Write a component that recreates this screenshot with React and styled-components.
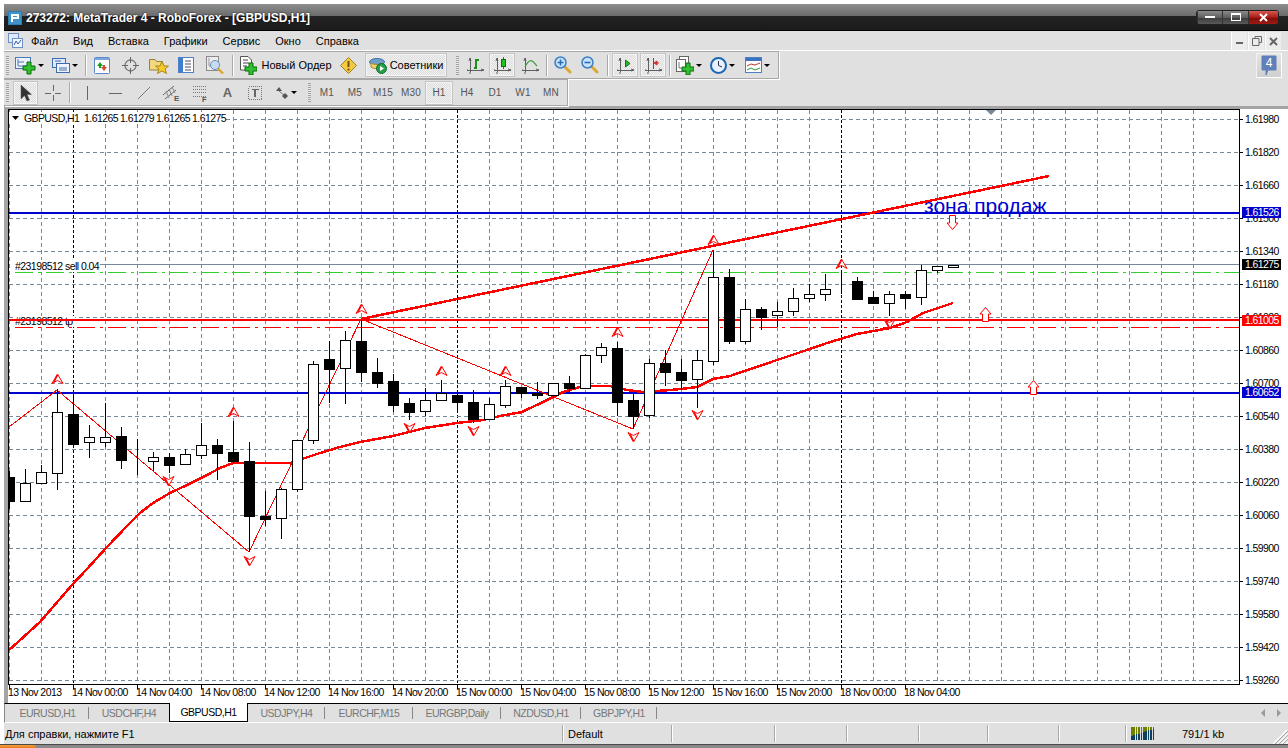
import React from "react";
import styled, { createGlobalStyle, css } from "styled-components";

const GlobalStyle = createGlobalStyle`
  html, body {
    margin: 0;
    padding: 0;
    overflow: hidden;
    background: #fff;
  }
  * {
    box-sizing: border-box;
  }
`;

/* ---------- chart data ---------- */

// body top, body bottom, wick top, wick bottom, black
const CANDLES = [
  [477, 501, 471, 509, 1], [483, 501, 469, 502, 0], [472, 483, 465, 483, 0], [412, 473, 389, 490, 0],
  [414, 444, 393, 448, 1], [437, 442, 425, 458, 0], [437, 442, 403, 447, 0], [436, 460, 427, 469, 1],
  [460, 460, 439, 475, 1], [457, 461, 452, 471, 0], [457, 465, 453, 473, 1], [454, 464, 449, 464, 0],
  [445, 455, 423, 459, 0], [445, 453, 439, 480, 1], [452, 461, 421, 463, 1], [461, 516, 442, 552, 1],
  [516, 519, 491, 526, 1], [489, 518, 488, 539, 0], [440, 489, 440, 492, 0], [364, 440, 361, 444, 0],
  [359, 369, 341, 403, 1], [340, 368, 331, 404, 0], [341, 372, 320, 382, 1], [372, 383, 358, 388, 1],
  [381, 405, 374, 412, 1], [403, 412, 398, 420, 1], [400, 411, 388, 416, 0], [393, 400, 380, 400, 0],
  [395, 402, 393, 412, 1], [402, 419, 390, 423, 1], [404, 419, 398, 420, 0], [386, 405, 380, 408, 0],
  [387, 393, 387, 398, 1], [393, 395, 382, 399, 1], [383, 395, 383, 398, 0], [383, 388, 376, 393, 1],
  [355, 388, 354, 389, 0], [347, 355, 343, 363, 0], [348, 402, 342, 416, 1], [400, 416, 393, 429, 1],
  [363, 415, 359, 418, 0], [363, 372, 350, 386, 1], [372, 380, 359, 390, 1], [360, 379, 350, 408, 0],
  [277, 361, 250, 365, 0], [277, 341, 269, 344, 1], [309, 341, 299, 344, 0], [309, 317, 307, 330, 1],
  [311, 315, 302, 327, 0], [298, 311, 288, 316, 0], [294, 298, 284, 302, 0], [289, 294, 274, 301, 0],
  [283, 283, 272, 294, 1], [281, 299, 277, 300, 1], [297, 303, 291, 304, 1], [294, 303, 291, 316, 0],
  [294, 298, 291, 309, 1], [270, 297, 265, 305, 0], [266, 270, 266, 273, 0], [265, 267, 265, 267, 0],
];

const MA_LINE =
  "8,651 40,622 72,585 87,569 107,547 128,525 140,513 153,503 170,493 187,485 207,475 220,468 233,463 260,463 290,463 305,458 320,453 340,447 360,442 393,436 425,428 457,423 483,420 500,416 522,412 543,402 563,392 580,387 593,386 610,386 627,390 643,392 670,390 681,389 697,387 713,379 730,376 777,360 807,350 827,343 857,334 890,328 907,322 923,313 953,303";
const ZIGZAG = "9,427 57,390 249,552 361,319 633,429 713,250";

const PRICES = [
  "1.61980", "1.61820", "1.61660", "1.61500", "1.61340", "1.61180", "1.61020", "1.60860", "1.60700",
  "1.60540", "1.60380", "1.60220", "1.60060", "1.59900", "1.59740", "1.59580", "1.59420", "1.59260",
];

const TIMES = [
  "13 Nov 2013", "14 Nov 00:00", "14 Nov 04:00", "14 Nov 08:00", "14 Nov 12:00", "14 Nov 16:00", "14 Nov 20:00",
  "15 Nov 00:00", "15 Nov 04:00", "15 Nov 08:00", "15 Nov 12:00", "15 Nov 16:00", "15 Nov 20:00", "18 Nov 00:00",
  "18 Nov 04:00",
];

const UP_MARKS = [[57, 379], [233, 412], [361, 309], [441, 371], [505, 371], [617, 332], [713, 240], [841, 264]];
const DOWN_MARKS = [[168, 481], [249, 561], [409, 428], [473, 431], [633, 437], [697, 415], [889, 324]];

const BOXES = [
  { y: 207, text: "1.61526", color: "#0000cd" },
  { y: 259, text: "1.61275", color: "#000" },
  { y: 315, text: "1.61005", color: "#ff0000" },
  { y: 387, text: "1.60652", color: "#0000cd" },
];

const TABS = [
  { name: "EURUSD,H1", w: 83 },
  { name: "USDCHF,H4", w: 80 },
  { name: "GBPUSD,H1", w: 79, active: true },
  { name: "USDJPY,H4", w: 77 },
  { name: "EURCHF,M15", w: 88 },
  { name: "EURGBP,Daily", w: 88 },
  { name: "NZDUSD,H1", w: 80 },
  { name: "GBPJPY,H1", w: 76 },
];

const MENU = ["Файл", "Вид", "Вставка", "Графики", "Сервис", "Окно", "Справка"];
const PERIODS = ["M1", "M5", "M15", "M30", "H1", "H4", "D1", "W1", "MN"];
const STATUS_CELLS = [109, 103, 72, 72, 69, 71, 67];

/* ---------- shell ---------- */

const Page = styled.div`
  width: 1288px;
  height: 748px;
  display: flex;
  flex-direction: column;
  padding-top: 4px;
  background: #fff;
  font-family: "Liberation Sans", Arial, sans-serif;
  overflow: hidden;
`;

const Body = styled.div`
  flex: 1;
  display: flex;
  flex-direction: column;
  padding-left: 4px;
  min-height: 0;
`;

const TitleBar = styled.div`
  height: 27px;
  flex: none;
  display: flex;
  align-items: center;
  padding: 0 9px 0 4px;
  gap: 4px;
  background: linear-gradient(#8e8e8e 0, #6c6c6c 12px, #232323 12px, #1b1b1b 26px, #000 26px);
`;

const TitleText = styled.span`
  flex: 1;
  color: #fff;
  font: bold 12px "Liberation Sans", Arial, sans-serif;
  text-shadow: 0 0 2px #000;
`;

const WindowControls = styled.div`
  display: flex;
  height: 15px;
  margin-top: -1px;
  border: 1px solid #222;
  border-radius: 3px;
  overflow: hidden;
`;

const WindowButton = styled.div`
  width: ${(p) => p.$w}px;
  display: flex;
  align-items: center;
  justify-content: center;
  border-left: 1px solid #333;
  background: ${(p) =>
    p.$red
      ? "linear-gradient(#d65a52 0, #a81a12 50%, #7c0c06 51%, #a01a12 100%)"
      : "linear-gradient(#8a8a8a 0, #5e5e5e 50%, #3a3a3a 51%, #5a5a5a 100%)"};
`;

const MenuBar = styled.div`
  height: 19px;
  flex: none;
  display: flex;
  align-items: center;
  gap: 15px;
  padding-left: 4px;
  background: #e0e0e0;
`;

const MenuIcon = styled.div`
  width: 15px;
  height: 17px;
  display: flex;
  align-items: center;
  margin-right: -7px;
`;

const MenuItem = styled.span`
  font-size: 11px;
  color: #000;
`;

const MenuSpacer = styled.div`
  flex: 1;
`;

const MdiButtons = styled.div`
  display: flex;
  gap: 1px;
  height: 18px;
  margin-right: 7px;
  margin-top: 1px;
`;

const MdiButton = styled.div`
  width: 16px;
  display: flex;
  align-items: center;
  justify-content: center;
  background: #ececec;
  border-left: 1px solid #fff;
`;

const ToolArea = styled.div`
  position: relative;
  flex: none;
  height: 56px;
  display: flex;
  flex-direction: column;
  border-top: 1px solid #fff;
  background: #e0e0e0;
`;

const ToolRow = styled.div`
  display: flex;
  align-items: center;
  flex: none;
  height: ${(p) => p.$h}px;
  width: ${(p) => p.$w}px;
  border-top: 1px solid #a8a8a8;
  border-right: 1px solid #a8a8a8;
  border-bottom: 1px solid #a8a8a8;
  box-shadow: 1px 1px 0 #fff;
`;

const Grip = styled.div`
  width: 3px;
  height: 19px;
  margin: 0 ${(p) => p.$right}px 0 ${(p) => p.$left}px;
  flex: none;
  background: repeating-linear-gradient(#a0a0a0 0 1px, #e8e8e8 1px 2px);
`;

const Tool = styled.div`
  flex: none;
  width: ${(p) => p.$w}px;
  height: 24px;
  display: flex;
  align-items: center;
  justify-content: center;
  gap: ${(p) => p.$gap || 2}px;
  margin-left: ${(p) => p.$ml || 0}px;
  color: #555;
  font-size: 10px;
  letter-spacing: 0.2px;
  ${(p) =>
    p.$pressed &&
    css`
      border: 2px solid #f4f4f4;
      outline: 1px solid #c4c4c4;
      outline-offset: -1px;
      background: repeating-conic-gradient(#f2f2f2 0 25%, #dcdcdc 0 50%) 0 0 / 2px 2px;
    `}
`;

const Sep = styled.div`
  width: 1px;
  height: 21px;
  flex: none;
  margin: 0 ${(p) => p.$right}px 0 ${(p) => p.$left}px;
  background: #a8a8a8;
  box-shadow: 1px 0 0 #fff;
`;

const ToolLabel = styled.span`
  font-size: 11px;
  color: #000;
  letter-spacing: 0;
  white-space: nowrap;
`;

const TextGlyph = styled.b`
  font-size: 13px;
  color: #666;
`;

const Caret = styled.span`
  width: 0;
  height: 0;
  border-left: 3px solid transparent;
  border-right: 3px solid transparent;
  border-top: 3px solid #000;
`;

const NotifyButton = styled.div`
  position: absolute;
  right: 6px;
  top: 2px;
  width: 26px;
  height: 25px;
  display: flex;
  align-items: center;
  justify-content: center;
  background: linear-gradient(#e4e4e4, #cfcfcf);
  border-right: 1px solid #fff;
  border-bottom: 1px solid #fff;
  border-left: 1px solid #f2f2f2;
  border-top: 1px solid #f2f2f2;
`;

const ChartFrame = styled.div`
  flex: none;
  height: 597px;
  display: flex;
  border-top: 3px solid #a4a4a4;
  border-left: 4px solid #a4a4a4;
  background: #fff;
`;

const ChartSvg = styled.svg`
  display: block;
  flex: none;
`;

const ChartText = styled.text`
  font-family: "Liberation Sans", Arial, sans-serif;
  font-size: ${(p) => p.$size || 10.5}px;
  letter-spacing: ${(p) => p.$spacing ?? -0.6}px;
  fill: ${(p) => p.$color || "#000"};
`;

const TabBar = styled.div`
  position: relative;
  flex: none;
  height: 20px;
  display: flex;
  padding-left: 1px;
  border-top: 1px solid #000;
  border-left: 1px solid #888;
  border-bottom: 1px solid #fff;
  background: #e0e0e0;
`;

const Tab = styled.div`
  flex: none;
  width: ${(p) => p.$w}px;
  height: 18px;
  display: flex;
  align-items: center;
  justify-content: center;
  font-size: 10.5px;
  color: #777;
  letter-spacing: -0.5px;
  ${(p) =>
    p.$active
      ? css`
          margin-top: -1px;
          height: 19px;
          background: #fff;
          color: #000;
          border: 1px solid #000;
          border-top: none;
        `
      : p.$noSep
      ? ""
      : css`
          background: linear-gradient(#888, #888) right 3px / 1px 12px no-repeat;
        `}
`;

const TabArrows = styled.div`
  margin-left: auto;
  margin-right: 7px;
  display: flex;
  align-items: center;
  gap: 12px;
`;

const TabArrow = styled.span`
  width: 0;
  height: 0;
  border-top: 4px solid transparent;
  border-bottom: 4px solid transparent;
  ${(p) => (p.$left ? "border-right: 4px solid #999;" : "border-left: 4px solid #999;")}
`;

const StatusBar = styled.div`
  position: relative;
  flex: none;
  height: 21px;
  display: flex;
  align-items: center;
  background: #e0e0e0;
  font-size: 11px;
  color: #000;
`;

const StatusCell = styled.div`
  flex: none;
  width: ${(p) => p.$w}px;
  height: 17px;
  display: flex;
  align-items: center;
  padding-left: ${(p) => p.$pad || 0}px;
  gap: 5px;
  ${(p) => !p.$last && "border-right: 1px solid #a8a8a8; box-shadow: 1px 0 0 #fff;"}
`;

const TrafficText = styled.span`
  margin-left: 22px;
`;

const ResizeGrip = styled.svg`
  position: absolute;
  right: 0;
  bottom: 0;
`;

const TaskBar = styled.div`
  flex: none;
  height: 4px;
  display: flex;
  border-top: 1px solid #4a4a4a;
  background: #8a8a8a;
`;

const StartButton = styled.div`
  width: 36px;
  background: linear-gradient(#f6a13c, #e8791a);
  border-top-right-radius: 4px;
`;

/* ---------- icons ---------- */

const Axes = () => (
  <>
    <path d="M5 3V17M2 15H19" stroke="#5f5f5f" fill="none" shapeRendering="crispEdges" />
    <path d="M4 6L5 3L6 6M16 14L19 15L16 16" stroke="#5f5f5f" fill="none" />
    <path d="M5 17V19M3 15H2" stroke="#5f5f5f" fill="none" />
  </>
);

const Plus = ({ x, y, s = 1 }) => (
  <path
    transform={`translate(${x} ${y}) scale(${s})`}
    d="M-2-6H2V-2H6V2H2V6H-2V2H-6V-2H-2Z"
    fill="#2fc12f"
    stroke="#0b6a0b"
    strokeWidth="1"
  />
);

const Icon = ({ w = 20, h = 20, children }) => (
  <svg width={w} height={h} viewBox={`0 0 ${w} ${h}`}>
    {children}
  </svg>
);

const NewChartIcon = () => (
  <Icon w={21} h={19}>
    <rect x="0.5" y="1.5" width="15" height="11" fill="#eef3fb" stroke="#4a78b8" />
    <path d="M3 3V10H12M3 6H9" stroke="#4a78b8" fill="none" />
    <Plus x={14} y={12} />
  </Icon>
);

const ProfilesIcon = () => (
  <Icon w={18} h={17}>
    <rect x="0.5" y="1.5" width="13" height="9" fill="#dfe9f8" stroke="#3f6cae" />
    <rect x="4.5" y="6.5" width="13" height="9" fill="#eef3fb" stroke="#3f6cae" />
    <path d="M3 4H9M7 11H15M7 13H15" stroke="#3f6cae" />
  </Icon>
);

const WatchIcon = () => (
  <Icon w={16} h={17}>
    <rect x="0.5" y="0.5" width="15" height="16" rx="1" fill="#fbfcff" stroke="#5d87c6" />
    <rect x="1" y="1" width="14" height="2" fill="#7da6df" />
    <path d="M6 5L9 9H7V11H5V9H3Z" fill="#1c9c1c" />
    <path d="M10 14L7 10H9V8H11V10H13Z" fill="#d8492c" />
  </Icon>
);

const CrosshairIcon = () => (
  <Icon w={17} h={17}>
    <circle cx="8.5" cy="8.5" r="5.5" fill="none" stroke="#777" strokeWidth="1.3" />
    <path d="M8.5 0V6M8.5 11V17M0 8.5H6M11 8.5H17" stroke="#666" />
  </Icon>
);

const FavIcon = () => (
  <Icon w={20} h={18}>
    <path d="M0.5 3.5H6L7.5 5.5H13V14H0.5Z" fill="#f2d77e" stroke="#98803a" />
    <path d="M13 5L15 10H19.5L16 13L17.5 17.5L13 15L8.5 17.5L10 13L6.5 10H11Z" fill="#f5c92e" stroke="#a88716" />
  </Icon>
);

const TerminalIcon = () => (
  <Icon w={16} h={16}>
    <rect x="0.5" y="0.5" width="15" height="15" fill="#fdfdff" stroke="#4f80c4" />
    <rect x="1" y="1" width="4" height="14" fill="#3f7fd0" />
    <path d="M7 4H13M7 7H13M7 10H13M7 13H13" stroke="#4e4e6a" />
  </Icon>
);

const TesterIcon = () => (
  <Icon w={19} h={19}>
    <rect x="0.5" y="0.5" width="12" height="14" fill="#ececec" stroke="#8a8a8a" />
    <path d="M3 2V10H10" stroke="#999" fill="none" />
    <circle cx="9" cy="9" r="4.5" fill="#c6dcf5" stroke="#6d8fb8" />
    <path d="M12 12.5L17 17.5" stroke="#d6a92c" strokeWidth="2.4" />
  </Icon>
);

const OrderIcon = () => (
  <Icon w={17} h={19}>
    <path d="M0.5 0.5H8L11.5 4V14H0.5Z" fill="#fff" stroke="#555" />
    <path d="M3 4H8M3 7H9M3 10H7" stroke="#444" />
    <Plus x={11} y={13} />
  </Icon>
);

const AlertIcon = () => (
  <Icon w={17} h={17}>
    <path d="M8.5 0.5L16.5 8.5L8.5 16.5L0.5 8.5Z" fill="#f5c940" stroke="#9a8328" strokeLinejoin="round" />
    <path d="M8.5 4V10M8.5 11.5V13.5" stroke="#6a5410" strokeWidth="2" />
  </Icon>
);

const ExpertIcon = () => (
  <Icon w={18} h={18}>
    <ellipse cx="8" cy="6" rx="7.5" ry="3.5" fill="#6f9fc9" stroke="#3f6f9f" />
    <path d="M2 7C5 9 11 9 14 7L14 11C11 13 4 13 2 11Z" fill="#f0d36a" stroke="#a58b2c" />
    <circle cx="12.5" cy="12.5" r="5" fill="#25a04a" stroke="#0f6a2c" />
    <path d="M11 10V15L15 12.5Z" fill="#fff" />
  </Icon>
);

const BarsIcon = () => (
  <Icon h={20}>
    <Axes />
    <path d="M9 13H11V5H14" stroke="#1d8f1d" strokeWidth="1.5" fill="none" shapeRendering="crispEdges" />
  </Icon>
);

const CandleIcon = () => (
  <Icon h={20}>
    <Axes />
    <path d="M11.5 2V14" stroke="#1d7f1d" shapeRendering="crispEdges" />
    <rect x="9.5" y="4.5" width="4" height="7" fill="#21c021" stroke="#126d12" shapeRendering="crispEdges" />
  </Icon>
);

const LineIcon = () => (
  <Icon h={20}>
    <Axes />
    <path d="M5 12C8 6 10 5 12 6C14 7 15 9 17 11" stroke="#3a9a3a" fill="none" strokeWidth="1.2" />
  </Icon>
);

const LensIcon = ({ minus }) => (
  <Icon w={18} h={18}>
    <path d="M10.5 10.5L16 16" stroke="#d8a92e" strokeWidth="3" strokeLinecap="round" />
    <circle cx="6.5" cy="6.5" r="5.5" fill="#c8e2fb" stroke="#3d7fc4" strokeWidth="1.5" />
    <path d={minus ? "M3.5 6.5H9.5" : "M3.5 6.5H9.5M6.5 3.5V9.5"} stroke="#2a6fb5" strokeWidth="1.6" />
  </Icon>
);

const ScrollIcon = () => (
  <Icon h={20}>
    <Axes />
    <path d="M10.5 5V12L15 8.5Z" fill="#26b626" stroke="#137a13" />
  </Icon>
);

const ShiftIcon = () => (
  <Icon h={20}>
    <Axes />
    <path d="M10.5 3V14" stroke="#3a5a9a" shapeRendering="crispEdges" />
    <path d="M16 8H13M11 8L14 6V10Z" stroke="#c33" fill="#c33" />
  </Icon>
);

const IndicatorsIcon = () => (
  <Icon w={18} h={19}>
    <rect x="3.5" y="0.5" width="9" height="12" fill="#fff" stroke="#666" />
    <rect x="0.5" y="3.5" width="9" height="12" fill="#fff" stroke="#666" />
    <path d="M3 6V12H8" stroke="#777" fill="none" />
    <Plus x={12} y={13} />
  </Icon>
);

const ClockIcon = () => (
  <Icon w={17} h={17}>
    <circle cx="8.5" cy="8.5" r="7.5" fill="#e8f1fb" stroke="#1d66b5" strokeWidth="2" />
    <path d="M8.5 4V8.5L12 10" stroke="#334" fill="none" />
  </Icon>
);

const TemplatesIcon = () => (
  <Icon w={17} h={16}>
    <rect x="0.5" y="0.5" width="16" height="15" fill="#fbfcfe" stroke="#4f7fbf" />
    <rect x="1" y="1" width="15" height="3" fill="#3a74c0" />
    <path d="M2 9L6 7L10 8L15 6" stroke="#c0392b" fill="none" />
    <path d="M2 13L6 11L10 13L15 11" stroke="#2f9a2f" fill="none" />
  </Icon>
);

const CursorIcon = () => (
  <Icon w={12} h={18}>
    <path d="M1 1V15L4.5 11.5L7 17L9.5 16L7 10.5H11.5Z" fill="#333" stroke="#555" strokeWidth="0.5" />
  </Icon>
);

const ThinCross = () => (
  <Icon w={16} h={16}>
    <path d="M8 0V6M8 10V16M0 8H6M10 8H16" stroke="#666" shapeRendering="crispEdges" />
  </Icon>
);

const VLine = () => (
  <Icon w={4} h={14}>
    <path d="M2 0V14" stroke="#666" strokeWidth="1" shapeRendering="crispEdges" />
  </Icon>
);

const HLine = () => (
  <Icon w={13} h={4}>
    <path d="M0 2H13" stroke="#666" shapeRendering="crispEdges" />
  </Icon>
);

const TrendIcon = () => (
  <Icon w={14} h={14}>
    <path d="M1 13L13 1" stroke="#777" />
  </Icon>
);

const ChannelIcon = () => (
  <Icon w={18} h={18}>
    <path d="M0 11L11 2M2 15L13 6" stroke="#666" />
    <path d="M3 7L6 14M6 5L9 12M9 3L12 9" stroke="#888" />
    <text x="11" y="17" fontSize="8" fontFamily="Liberation Sans" fontWeight="bold" fill="#555">E</text>
  </Icon>
);

const FiboIcon = () => (
  <Icon w={16} h={18}>
    <path d="M1 2H15M1 5H15M1 8H15M1 12H15" stroke="#777" strokeDasharray="1 1" shapeRendering="crispEdges" />
    <text x="10" y="17.5" fontSize="7.5" fontFamily="Liberation Sans" fontWeight="bold" fill="#555">F</text>
  </Icon>
);

const LabelIcon = () => (
  <Icon w={14} h={14}>
    <rect x="0.5" y="0.5" width="13" height="13" fill="none" stroke="#777" strokeDasharray="1 1" shapeRendering="crispEdges" />
    <path d="M3.5 3.5H10.5M7 3.5V11" stroke="#666" strokeWidth="1.6" shapeRendering="crispEdges" />
  </Icon>
);

const ArrowsIcon = () => (
  <Icon w={14} h={14}>
    <path d="M1 5L4 1L7 5Z" fill="#555" />
    <path d="M4 5L10 10" stroke="#777" />
    <path d="M7 10L10 13L13 10L10 7Z" fill="#555" />
  </Icon>
);

const NotifyIcon = () => (
  <svg width="16" height="21" viewBox="0 0 16 21">
    <path d="M1 1H15V15H7L5 20V15H1Z" fill="#5f80b8" stroke="#5f80b8" strokeLinejoin="round" />
    <text x="8" y="12" textAnchor="middle" fontSize="12" fontFamily="Liberation Sans" fill="#fff">4</text>
  </svg>
);

const AppLogo = () => (
  <svg width="14" height="14" viewBox="0 0 14 14">
    <rect width="14" height="14" fill="#2f7fb4" />
    <rect x="1" y="1" width="12" height="12" fill="#3e94c9" />
    <path d="M3 3H11V8H5V11H3ZM5 5V6H9V5Z" fill="#fff" fillRule="evenodd" />
  </svg>
);

const ChildLogo = () => (
  <svg width="15" height="15" viewBox="0 0 15 15">
    <rect x="0.5" y="0.5" width="10" height="9" fill="#dfeafa" stroke="#6d90c8" />
    <rect x="4.5" y="5.5" width="10" height="9" fill="#f2f6fd" stroke="#6d90c8" />
    <path d="M6 12L8 8L10 11L13 7" stroke="#2f5fa8" fill="none" />
  </svg>
);

const SignalIcon = () => (
  <svg width="24" height="13" viewBox="0 0 24 13" shapeRendering="crispEdges">
    {Array.from({ length: 10 }).map((_, i) => {
      const x = i * 2.4;
      const split = 9 - i * 0.8;
      return (
        <g key={i}>
          <rect x={x} y="0" width="1.6" height={split} fill="#6f7f00" />
          <rect x={x} y={split} width="1.6" height={13 - split} fill="#0c4060" />
        </g>
      );
    })}
  </svg>
);

/* ---------- chart pieces ---------- */

const Candle = ({ x, data }) => {
  const [top, bottom, wickTop, wickBottom, black] = data;
  return (
    <g shapeRendering="crispEdges">
      <line x1={x + 0.5} x2={x + 0.5} y1={wickTop} y2={wickBottom} stroke="#000" />
      <rect
        x={x - 4.5}
        y={top + 0.5}
        width={10}
        height={Math.max(bottom - top, 0)}
        fill={black ? "#000" : "#fff"}
        stroke="#000"
      />
    </g>
  );
};

const FractalMark = ({ x, y, up }) => (
  <g transform={`translate(${x + 0.5} ${y}) scale(1 ${up ? 1 : -1})`}>
    <path d="M0-5L5.5 4.5L0 1.5L-5.5 4.5Z" fill="#fff" stroke="#ff0000" />
    <path d="M0-4L-3.5 3" stroke="#ff0000" strokeWidth="1.6" />
  </g>
);

const BlockArrow = ({ x, top, up }) => (
  <g transform={`translate(${x + 0.5} ${top}) ${up ? "" : "translate(0 15) scale(1 -1)"}`}>
    <path d="M0 0.5L5.5 7H3V14.5H-3V7H-5.5Z" fill="#fff" stroke="#ff0000" />
  </g>
);

const Chart = () => (
  <ChartSvg width="1280" height="594" viewBox="8 109 1280 594">
    <rect x="8" y="109" width="1280" height="594" fill="#fff" />

    {/* grid */}
    <g shapeRendering="crispEdges" strokeWidth="1">
      {Array.from({ length: 38 }).map((_, i) => {
        const x = 9 + i * 32;
        const isDay = (x - 73) % 384 === 0;
        return (
          <line
            key={x}
            x1={x + 0.5}
            x2={x + 0.5}
            y1="110"
            y2="684"
            stroke={isDay ? "#000" : "#778899"}
            strokeDasharray={isDay ? "3 2" : "4 3"}
          />
        );
      })}
      {PRICES.map((p, i) => (
        <line key={p} x1="9" x2="1239" y1={119.5 + i * 33} y2={119.5 + i * 33} stroke="#778899" strokeDasharray="4 3" />
      ))}
    </g>

    <rect x="9" y="112" width="216" height="12" fill="#fff" />
    <path d="M12 116H19L15.5 120Z" fill="#000" />
    <ChartText x="24" y="121.5">GBPUSD,H1</ChartText>
    <ChartText x="84" y="121.5" $spacing={-0.55}>1.61265</ChartText>
    <ChartText x="120" y="121.5" $spacing={-0.55}>1.61279</ChartText>
    <ChartText x="156" y="121.5" $spacing={-0.55}>1.61265</ChartText>
    <ChartText x="192" y="121.5" $spacing={-0.55}>1.61275</ChartText>

    {/* order and level lines */}
    <rect x="15" y="260" width="85" height="12" fill="#fff" />
    <rect x="15" y="316" width="60" height="11" fill="#fff" />
    <ChartText x="15" y="270" $spacing={-0.55}>#23198512 sell 0.04</ChartText>
    <ChartText x="15" y="325" $spacing={-0.55}>#23198512 tp</ChartText>
    <g shapeRendering="crispEdges">
      <line x1="100" x2="1239" y1="264.5" y2="264.5" stroke="#778899" />
      <line x1="15" x2="1239" y1="272.5" y2="272.5" stroke="#32cd32" strokeDasharray="18 5 3 5" />
      <line x1="15" x2="1239" y1="327.5" y2="327.5" stroke="#ff0000" strokeDasharray="18 5 3 5" />
      <line x1="9" x2="1239" y1="213" y2="213" stroke="#0000cd" strokeWidth="2" />
      <line x1="9" x2="1239" y1="393" y2="393" stroke="#0000cd" strokeWidth="2" />
      <line x1="9" x2="1239" y1="320" y2="320" stroke="#ff0000" strokeWidth="2" />
    </g>

    <ChartText x="924" y="213" $size={21} $spacing={0} $color="#0000cd">зона продаж</ChartText>

    {/* indicators */}
    <polyline points={ZIGZAG} fill="none" stroke="#ff0000" strokeWidth="1" shapeRendering="crispEdges" />
    <polyline points={MA_LINE} fill="none" stroke="#ff0000" strokeWidth="2.5" shapeRendering="crispEdges" />
    <line x1="361" y1="319" x2="1049" y2="176" stroke="#ff0000" strokeWidth="2.5" shapeRendering="crispEdges" />

    {UP_MARKS.map(([x, y]) => (
      <FractalMark key={x} x={x} y={y} up />
    ))}
    {DOWN_MARKS.map(([x, y]) => (
      <FractalMark key={x} x={x} y={y} />
    ))}

    {CANDLES.map((c, i) => (
      <Candle key={i} x={9 + i * 16} data={c} />
    ))}

    <BlockArrow x={952} top={215} />
    <BlockArrow x={985} top={307} up />
    <BlockArrow x={1033} top={380} up />

    {/* frame */}
    <path d="M8.5 109.5H1239.5V684.5H8.5Z" fill="none" stroke="#000" shapeRendering="crispEdges" />
    <path d="M986 110H996L991 115Z" fill="#778899" />

    {/* price axis */}
    {PRICES.map((p, i) => (
      <g key={p}>
        <line x1="1240" x2="1243" y1={119.5 + i * 33} y2={119.5 + i * 33} stroke="#000" shapeRendering="crispEdges" />
        <ChartText x="1245" y={123 + i * 33}>{p}</ChartText>
      </g>
    ))}
    {BOXES.map((b) => (
      <g key={b.text}>
        <rect x="1242" y={b.y} width="39" height="11" fill={b.color} />
        <ChartText x="1245" y={b.y + 9} $color="#fff">{b.text}</ChartText>
      </g>
    ))}

    {/* time axis */}
    {Array.from({ length: 39 }).map((_, i) => {
      const x = 9 + i * 32;
      const major = i % 2 === 0 && x <= 905;
      return major ? (
        <line key={x} x1={x + 0.5} x2={x + 0.5} y1="684" y2="689" stroke="#000" shapeRendering="crispEdges" />
      ) : null;
    })}
    {TIMES.map((t, i) => (
      <ChartText key={t} x={i === 0 ? 8 : 8 + i * 64} y="696" $spacing={-0.55}>{t}</ChartText>
    ))}
  </ChartSvg>
);

/* ---------- page ---------- */

const App = () => (
  <>
    <GlobalStyle />
    <Page>
      <Body>
        <TitleBar>
          <AppLogo />
          <TitleText>273272: MetaTrader 4 - RoboForex - [GBPUSD,H1]</TitleText>
          <WindowControls>
            <WindowButton $w={25}>
              <svg width="10" height="4"><rect y="1" width="10" height="2" fill="#fff" /></svg>
            </WindowButton>
            <WindowButton $w={26}>
              <svg width="10" height="9"><rect x="0.5" y="0.5" width="9" height="7" fill="none" stroke="#fff" /><rect y="0" width="10" height="2" fill="#fff" /></svg>
            </WindowButton>
            <WindowButton $w={30} $red>
              <svg width="9" height="9"><path d="M1 1L8 8M8 1L1 8" stroke="#fff" strokeWidth="2" /></svg>
            </WindowButton>
          </WindowControls>
        </TitleBar>

        <MenuBar>
          <MenuIcon><ChildLogo /></MenuIcon>
          {MENU.map((m) => (
            <MenuItem key={m}>{m}</MenuItem>
          ))}
          <MenuSpacer />
          <MdiButtons>
            <MdiButton><svg width="8" height="8"><rect y="5" width="7" height="2" fill="#666" /></svg></MdiButton>
            <MdiButton><svg width="10" height="10"><path d="M3 2.5V0.5H9.5V6.5H7M0.5 2.5H7V9.5H0.5Z" fill="none" stroke="#666" /></svg></MdiButton>
            <MdiButton><svg width="9" height="9"><path d="M1 1L8 8M8 1L1 8" stroke="#666" strokeWidth="2" /></svg></MdiButton>
          </MdiButtons>
        </MenuBar>

        <ToolArea>
          <ToolRow $h={28} $w={775}>
            <Grip $left={2} $right={4} />
            <Tool $w={33}><NewChartIcon /><Caret /></Tool>
            <Tool $w={38}><ProfilesIcon /><Caret /></Tool>
            <Sep $left={1} $right={1} />
            <Tool $w={29}><WatchIcon /></Tool>
            <Tool $w={29}><CrosshairIcon /></Tool>
            <Tool $w={27}><FavIcon /></Tool>
            <Tool $w={28}><TerminalIcon /></Tool>
            <Tool $w={30}><TesterIcon /></Tool>
            <Sep $left={2} $right={1} />
            <Tool $w={100} $ml={2} $gap={4}><OrderIcon /><ToolLabel>Новый Ордер</ToolLabel></Tool>
            <Tool $w={25}><AlertIcon /></Tool>
            <Tool $w={82} $ml={4} $gap={3} $pressed><ExpertIcon /><ToolLabel>Советники</ToolLabel></Tool>
            <Grip $left={9} $right={2} />
            <Tool $w={28}><BarsIcon /></Tool>
            <Tool $w={26} $pressed><CandleIcon /></Tool>
            <Tool $w={29}><LineIcon /></Tool>
            <Sep $left={2} $right={2} />
            <Tool $w={27}><LensIcon /></Tool>
            <Tool $w={28}><LensIcon minus /></Tool>
            <Sep $left={3} $right={4} />
            <Tool $w={26} $pressed><ScrollIcon /></Tool>
            <Tool $w={26} $ml={2} $pressed><ShiftIcon /></Tool>
            <Sep $left={3} $right={2} />
            <Tool $w={33}><IndicatorsIcon /><Caret /></Tool>
            <Tool $w={35}><ClockIcon /><Caret /></Tool>
            <Tool $w={34}><TemplatesIcon /><Caret /></Tool>
          </ToolRow>
          <ToolRow $h={27} $w={564}>
            <Grip $left={2} $right={4} />
            <Tool $w={25} $pressed><CursorIcon /></Tool>
            <Tool $w={29}><ThinCross /></Tool>
            <Sep $left={2} $right={2} />
            <Tool $w={29}><VLine /></Tool>
            <Tool $w={29}><HLine /></Tool>
            <Tool $w={28}><TrendIcon /></Tool>
            <Tool $w={28}><ChannelIcon /></Tool>
            <Tool $w={28}><FiboIcon /></Tool>
            <Tool $w={27}><TextGlyph>A</TextGlyph></Tool>
            <Tool $w={28}><LabelIcon /></Tool>
            <Tool $w={34}><ArrowsIcon /><Caret /></Tool>
            <Grip $left={5} $right={2} />
            {PERIODS.map((p) => (
              <Tool key={p} $w={28} $pressed={p === "H1"}>{p}</Tool>
            ))}
          </ToolRow>
          <NotifyButton><NotifyIcon /></NotifyButton>
        </ToolArea>

        <ChartFrame>
          <Chart />
        </ChartFrame>

        <TabBar>
          {TABS.map((t, i) => (
            <Tab key={t.name} $w={t.w} $active={t.active} $noSep={TABS[i + 1]?.active}>
              {t.name}
            </Tab>
          ))}
          <TabArrows>
            <TabArrow $left />
            <TabArrow />
          </TabArrows>
        </TabBar>

        <StatusBar>
          <StatusCell $w={559} $pad={1}>Для справки, нажмите F1</StatusCell>
          <StatusCell $w={STATUS_CELLS[0]} $pad={5}>Default</StatusCell>
          {STATUS_CELLS.slice(1).map((w, i) => (
            <StatusCell key={i} $w={w} />
          ))}
          <StatusCell $w={158} $pad={5} $last>
            <SignalIcon />
            <TrafficText>791/1 kb</TrafficText>
          </StatusCell>
          <ResizeGrip width="16" height="15" viewBox="0 0 16 15">
            <path d="M15 1L1 15M16 5L6 15M16 9L10 15M16 13L14 15" stroke="#fff" strokeWidth="1.2" />
            <path d="M16 2L3 15M16 6L7 15M16 10L11 15" stroke="#a8a8a8" strokeWidth="1" />
          </ResizeGrip>
        </StatusBar>
      </Body>
      <TaskBar>
        <StartButton />
      </TaskBar>
    </Page>
  </>
);

export default App;
